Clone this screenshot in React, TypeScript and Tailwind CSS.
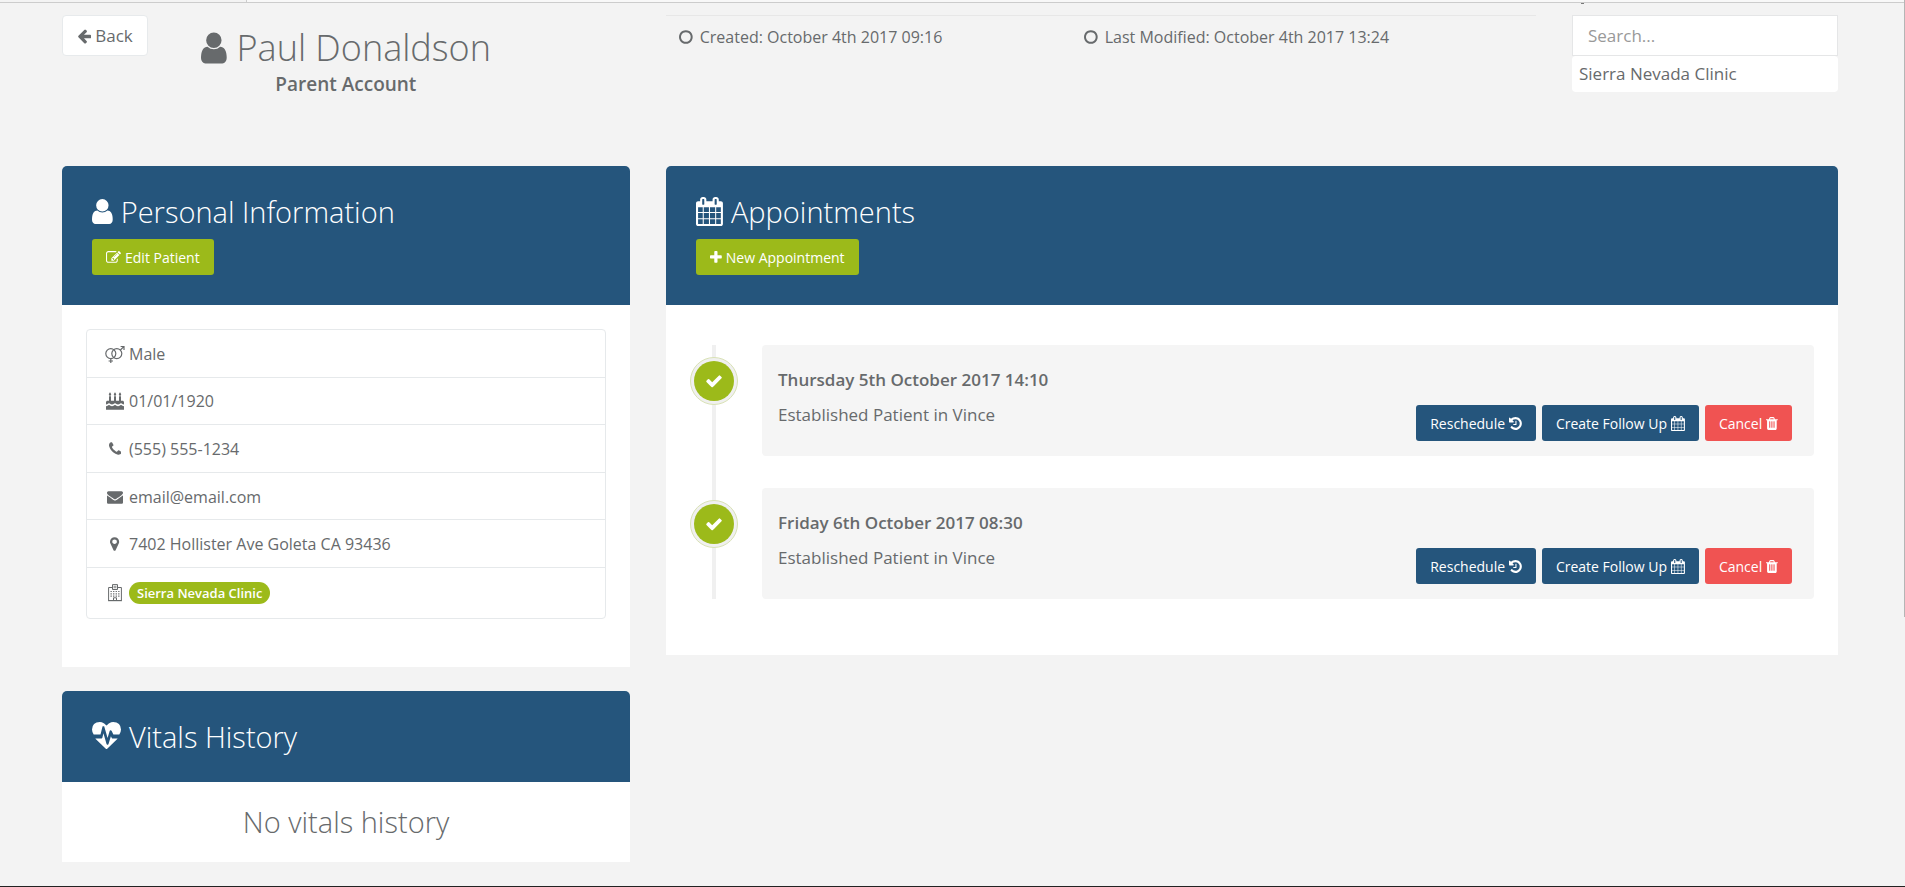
import React from "react";

type Glyph = { x: number; w: number; d: string };

const glyphs: Record<string, Glyph> = {
  user: { x: 256, w: 1280, d: "M1536 1399q0 109-62.5 187t-150.5 78h-854q-88 0-150.5-78t-62.5-187q0-85 8.5-160.5t31.5-152 58.5-131 94-89 134.5-34.5q131 128 313 128t313-128q76 0 134.5 34.5t94 89 58.5 131 31.5 152 8.5 160.5zm-256-887q0 159-112.5 271.5t-271.5 112.5-271.5-112.5-112.5-271.5 112.5-271.5 271.5-112.5 271.5 112.5 112.5 271.5z" },
  calendar: { x: 64, w: 1664, d: "M192 1664h288v-288h-288v288zm352 0h320v-288h-320v288zm-352-352h288v-320h-288v320zm352 0h320v-320h-320v320zm-352-384h288v-288h-288v288zm736 736h320v-288h-320v288zm-384-736h320v-288h-320v288zm768 736h288v-288h-288v288zm-384-352h320v-320h-320v320zm-352-864v-288q0-13-9.5-22.5t-22.5-9.5h-64q-13 0-22.5 9.5t-9.5 22.5v288q0 13 9.5 22.5t22.5 9.5h64q13 0 22.5-9.5t9.5-22.5zm736 864h288v-320h-288v320zm-384-384h320v-288h-320v288zm384 0h288v-288h-288v288zm32-480v-288q0-13-9.5-22.5t-22.5-9.5h-64q-13 0-22.5 9.5t-9.5 22.5v288q0 13 9.5 22.5t22.5 9.5h64q13 0 22.5-9.5t9.5-22.5zm384-64v1280q0 52-38 90t-90 38h-1408q-52 0-90-38t-38-90v-1280q0-52 38-90t90-38h128v-96q0-66 47-113t113-47h64q66 0 113 47t47 113v96h384v-96q0-66 47-113t113-47h64q66 0 113 47t47 113v96h128q52 0 90 38t38 90z" },
  check: { x: 0, w: 1792, d: "M1671 566q0 40-28 68l-724 724-136 136q-28 28-68 28t-68-28l-136-136-362-362q-28-28-28-68t28-68l136-136q28-28 68-28t68 28l294 295 656-657q28-28 68-28t68 28l136 136q28 28 28 68z" },
  plus: { x: 192, w: 1408, d: "M1600 736v192q0 40-28 68t-68 28h-416v416q0 40-28 68t-68 28h-192q-40 0-68-28t-28-68v-416h-416q-40 0-68-28t-28-68v-192q0-40 28-68t68-28h416v-416q0-40 28-68t68-28h192q40 0 68 28t28 68v416h416q40 0 68 28t28 68z" },
  history: { x: 128, w: 1536, d: "M1664 896q0 156-61 298t-164 245-245 164-298 61q-172 0-327-72.5t-264-204.5q-7-10-6.5-22.5t8.5-20.5l137-138q10-9 25-9 16 2 23 12 73 95 179 147t225 52q104 0 198.5-40.5t163.5-109.5 109.5-163.5 40.5-198.5-40.5-198.5-109.5-163.5-163.5-109.5-198.5-40.5q-98 0-188 35.5t-160 101.5l137 138q31 30 14 69-17 40-59 40h-448q-26 0-45-19t-19-45v-448q0-42 40-59 39-17 69 14l130 129q107-101 244.5-156.5t284.5-55.5q156 0 298 61t245 164 164 245 61 298zm-640-288v448q0 14-9 23t-23 9h-320q-14 0-23-9t-9-23v-64q0-14 9-23t23-9h224v-352q0-14 9-23t23-9h64q14 0 23 9t9 23z" },
  trash: { x: 192, w: 1408, d: "M704 1376v-704q0-14-9-23t-23-9h-64q-14 0-23 9t-9 23v704q0 14 9 23t23 9h64q14 0 23-9t9-23zm256 0v-704q0-14-9-23t-23-9h-64q-14 0-23 9t-9 23v704q0 14 9 23t23 9h64q14 0 23-9t9-23zm256 0v-704q0-14-9-23t-23-9h-64q-14 0-23 9t-9 23v704q0 14 9 23t23 9h64q14 0 23-9t9-23zm-544-992h448l-48-117q-7-9-17-11h-317q-10 2-17 11zm928 32v64q0 14-9 23t-23 9h-96v948q0 83-47 143.5t-113 60.5h-832q-66 0-113-58.5t-47-141.5v-952h-96q-14 0-23-9t-9-23v-64q0-14 9-23t23-9h309l70-167q15-37 54-63t79-26h320q40 0 79 26t54 63l70 167h309q14 0 23 9t9 23z" },
  arrowLeft: { x: 64, w: 1600, d: "M1664 896v128q0 53-32.5 90.5t-84.5 37.5h-704l293 294q38 36 38 90t-38 90l-75 76q-37 37-90 37-52 0-91-37l-651-652q-37-37-37-90 0-52 37-91l651-650q38-38 91-38 52 0 90 38l75 74q38 38 38 91t-38 91l-293 293h704q52 0 84.5 37.5t32.5 90.5z" },
  circle: { x: 128, w: 1536, d: "M896 352q-148 0-273 73t-198 198-73 273 73 273 198 198 273 73 273-73 198-198 73-273-73-273-198-198-273-73zm768 544q0 209-103 385.5t-279.5 279.5-385.5 103-385.5-103-279.5-279.5-103-385.5 103-385.5 279.5-279.5 385.5-103 385.5 103 279.5 279.5 103 385.5z" },
  phone: { x: 192, w: 1408, d: "M1600 1240q0 27-10 70.5t-21 68.5q-21 50-122 106-94 51-186 51-27 0-52.5-3.5t-57.5-12.5-47.5-14.5-55.5-20.5-49-18q-98-35-175-83-128-79-264.5-215.5t-215.5-264.5q-48-77-83-175-3-9-18-49t-20.5-55.5-14.5-47.5-12.5-57.5-3.5-52.5q0-92 51-186 56-101 106-122 25-11 68.5-21t70.5-10q14 0 21 3 18 6 53 76 11 19 30 54t35 63.5 31 53.5q3 4 17.5 25t21.5 35.5 7 28.5q0 20-28.5 50t-62 55-62 53-28.5 46q0 9 5 22.5t8.5 20.5 14 24 11.5 19q76 137 174 235t235 174q2 1 19 11.5t24 14 20.5 8.5 22.5 5q18 0 46-28.5t53-62 55-62 50-28.5q14 0 28.5 7t35.5 21.5 25 17.5q25 15 53.5 31t63.5 35 54 30q70 35 76 53 3 7 3 21z" },
  envelope: { x: 0, w: 1792, d: "M1792 710v794q0 66-47 113t-113 47h-1472q-66 0-113-47t-47-113v-794q44 49 101 87 362 246 497 345 57 42 92.5 65.5t94.5 48 110 24.5h2q51 0 110-24.5t94.5-48 92.5-65.5q170-123 498-345 57-39 100-87zm0-294q0 79-49 151t-122 123q-376 261-468 325-10 7-42.5 30.5t-54 38-52 32.5-57.5 27-50 9h-2q-23 0-50-9t-57.5-27-52-32.5-54-38-42.5-30.5q-91-64-262-182.5t-205-142.5q-62-42-117-115.5t-55-136.5q0-78 41.5-130t118.5-52h1472q65 0 112.5 47t47.5 113z" },
  marker: { x: 384, w: 1024, d: "M1152 640q0-106-75-181t-181-75-181 75-75 181 75 181 181 75 181-75 75-181zm256 0q0 109-33 179l-364 774q-16 33-47.5 52t-67.5 19-67.5-19-46.5-52l-365-774q-33-70-33-179 0-212 150-362t362-150 362 150 150 362z" },
  heartbeat: { x: 0, w: 1792, d: "M1280 1024h305q-5 6-10 10.5t-9 7.5l-3 4-623 600q-18 18-44 18t-44-18l-624-602q-5-2-21-20h369q22 0 39.5-13.5t22.5-34.5l70-281 190 667q6 20 23 33t39 13q21 0 38-13t23-33l146-485 56 112q18 35 57 35zm512-556q0 145-103 300h-369l-111-221q-8-17-25.5-27t-36.5-8q-45 5-56 46l-129 430-196-686q-6-20-23.5-33t-39.5-13-39 13.5-22 34.5l-116 464h-423q-103-155-103-300 0-220 127-344t351-124q62 0 126.5 21.5t120 58 95.5 68.5 76 68q36-36 76-68t95.5-68.5 120-58 126.5-21.5q224 0 351 124t127 344z" },
  edit: { x: 0, w: 1792, d: "M888 1184l116-116-152-152-116 116v56h96v96h56zm440-720q-16-16-33 1l-350 350q-17 17-1 33t33-1l350-350q17-17 1-33zm80 594v190q0 119-84.5 203.5t-203.5 84.5h-832q-119 0-203.5-84.5t-84.5-203.5v-832q0-119 84.5-203.5t203.5-84.5h832q63 0 117 25 15 7 18 23 3 17-9 29l-49 49q-14 14-32 8-23-6-45-6h-832q-66 0-113 47t-47 113v832q0 66 47 113t113 47h832q66 0 113-47t47-113v-126q0-13 9-22l64-64q15-15 35-7t20 29zm-96-738l288 288-672 672h-288v-288zm444 132l-92 92-288-288 92-92q28-28 68-28t68 28l152 152q28 28 28 68t-28 68z" },
};

function Icon({ name, className }: { name: string; className: string }) {
  const g = glyphs[name];
  return (
    <svg aria-hidden="true" viewBox={`${g.x} 0 ${g.w} 1792`} fill="currentColor" className={`w-auto shrink-0 ${className}`}>
      <path d={g.d} />
    </svg>
  );
}

function VenusMars() {
  return (
    <svg aria-hidden="true" viewBox="0 0 20 18" fill="none" stroke="currentColor" strokeWidth="1.2" className="h-[18px] w-5 shrink-0">
      <circle cx="5.8" cy="8.600" r="5" />
      <circle cx="11.800" cy="8.600" r="5" />
      <path d="M5.800 13.600V18M3.600 16H8M15.400 5L18.800 1.600M15.600 1.500H19V5" />
    </svg>
  );
}

function Cake() {
  return (
    <svg aria-hidden="true" viewBox="0 0 18 18" fill="currentColor" className="h-[18px] w-[18px] shrink-0">
      <path d="M3 4.2h2V9H3zM8 4.2h2V9H8zM13 4.2h2V9h-2zM4 0.2c.9 1.1 1.2 1.8 1.2 2.4a1.2 1.2 0 0 1-2.4 0C2.800 2 3.100 1.300 4 .2zM9 .2c.9 1.100 1.200 1.800 1.200 2.400a1.200 1.200 0 0 1-2.400 0C7.800 2 8.100 1.300 9 .2zM14 .2c.9 1.100 1.200 1.800 1.200 2.400a1.200 1.200 0 0 1-2.400 0c0-.6.3-1.300 1.200-2.400z" />
      <path d="M0 12.600V10.300C0 9.500.7 8.800 1.500 8.800h15c.8 0 1.500.7 1.500 1.500v2.300c-1.500 0-1.700-1.300-3-1.300s-1.500 1.300-3 1.300-1.700-1.300-3-1.300-1.500 1.300-3 1.300-1.700-1.300-3-1.300-1.500 1.300-3 1.300z" />
      <path d="M0 14.300c1.500 0 1.700-1.300 3-1.300s1.500 1.300 3 1.300 1.700-1.300 3-1.300 1.500 1.300 3 1.300 1.700-1.300 3-1.300 1.500 1.300 3 1.300V17.800H0z" />
    </svg>
  );
}

function Hospital() {
  return (
    <svg aria-hidden="true" viewBox="0 0 14 18" fill="none" stroke="currentColor" className="h-[18px] w-3.5 shrink-0">
      <path d="M4.500 3.500H.6V16.500H13.400V3.500H9.500M4.500 5.500V.6H9.500V5.500z" />
      <path d="M6.100 1.700V4.400M7.900 1.700V4.400M6.100 3H7.900" strokeWidth=".7" />
      <path d="M2.500 7.500h9M2.500 9.800h9M2.500 12.100h9" strokeWidth="1.200" strokeDasharray="1.300 1.260" />
      <path d="M5.500 16.500V13.800h3v2.700M0 16.700h14" />
    </svg>
  );
}

function Panel({ icon, title, action, children }: { icon: string; title: string; action?: React.ReactNode; children: React.ReactNode }) {
  return (
    <section className="rounded-t-[5px] bg-white">
      <header className={`rounded-t-[5px] bg-[#25557c] px-[30px] pt-[26px] text-white ${action ? "pb-[30px]" : "pb-[26px]"}`}>
        <h2 className="flex items-center gap-2 text-[29px] leading-[39px] font-light">
          <Icon name={icon} className="h-[29px]" />
          {title}
        </h2>
        {action && <div className="flex pt-2">{action}</div>}
      </header>
      {children}
    </section>
  );
}

const btn = "flex h-9 items-center gap-1 rounded-[3px] px-[14px] pt-px text-[14px] leading-5 text-white";

function Appointment({ date }: { date: string }) {
  return (
    <li className="flex items-start gap-6">
      <div className="relative mt-3 flex h-12 w-12 shrink-0 items-center justify-center rounded-full border border-[#d9e2b5] bg-[#f0f0f0]">
        <span className="flex h-10 w-10 items-center justify-center rounded-full bg-[#9cba1a] text-white">
          <Icon name="check" className="h-[18px]" />
        </span>
      </div>
      <article className="flex min-h-[111px] flex-1 flex-wrap items-end justify-between gap-x-4 rounded-[4px] bg-[#f5f5f5] pt-[23px] pr-[22px] pb-[15px] pl-4">
        <div className="self-start">
          <h3 className="text-[17px] leading-6 font-semibold">{date}</h3>
          <p className="mt-[11px] text-[17px] leading-6">Established Patient in Vince</p>
        </div>
        <div className="flex gap-[6px]">
          <button type="button" className={`${btn} bg-[#25557c]`}>Reschedule<Icon name="history" className="h-[15px]" /></button>
          <button type="button" className={`${btn} bg-[#25557c]`}>Create Follow Up<Icon name="calendar" className="h-[15px]" /></button>
          <button type="button" className={`${btn} bg-[#f05352]`}>Cancel<Icon name="trash" className="h-[15px]" /></button>
        </div>
      </article>
    </li>
  );
}

function InfoRow({ icon, children, last }: { icon: React.ReactNode; children: React.ReactNode; last?: boolean }) {
  return (
    <li className={`flex items-center gap-1 px-[18px] text-[16px] leading-6 ${last ? "h-[50px]" : "flex-1 border-b border-[#e6e9eb] pt-px"}`}>
      <span className="flex w-5 shrink-0 justify-center">{icon}</span>
      {children}
    </li>
  );
}

export default function App() {
  return (
    <div className="relative flex min-h-screen flex-col border-b border-[#222] bg-[#f3f3f3] font-['Open_Sans','Noto_Sans',sans-serif] text-[16px] text-[#676a6c]">
      <div className="flex h-[3px] border-b border-[#ccc] bg-[#f8f8f8]">
        <div className="w-[247px] border-r border-[#ccc] bg-[#f3f3f3]" />
      </div>
      <div className="absolute top-0 right-0 h-[617px] w-px bg-[#b5b5b5]" />

      <main className="pt-3 pr-[67px] pl-[62px]">
        <div className="grid min-h-[151px] grid-cols-12 items-start gap-x-9">
          <div className="col-span-4 flex items-start gap-[53px]">
            <button type="button" className="flex h-[41px] items-center gap-1 rounded-[4px] border border-[#e7eaec] bg-white px-[14px] text-[17px]">
              <Icon name="arrowLeft" className="h-4" />
              Back
            </button>
            <div className="pt-[9px] text-center">
              <h1 className="flex items-center gap-[10px] text-[36px] leading-[48px] font-light whitespace-nowrap">
                <Icon name="user" className="h-9" />
                Paul Donaldson
              </h1>
              <p className="text-[19px] leading-6 font-semibold">Parent Account</p>
            </div>
          </div>
          <div className="col-span-6 grid grid-cols-[405px_1fr] border-t border-[#e7e7e7] px-[13px] pt-[9px] leading-6">
            <span className="flex items-center gap-[7px]"><Icon name="circle" className="h-4" />Created: October 4th 2017 09:16</span>
            <span className="flex items-center gap-[7px]"><Icon name="circle" className="h-4" />Last Modified: October 4th 2017 13:24</span>
          </div>
          <div className="relative col-span-2">
            <span className="absolute -top-3 left-[9px] h-px w-[3px] bg-[#777]" />
            <input type="search" aria-label="Search" placeholder="Search..." className="block h-[41px] w-full border border-[#e5e6e7] bg-white px-[15px] text-[17px] placeholder:text-[#999]" />
            <select aria-label="Clinic" className="block h-9 w-full appearance-none rounded-[4px] bg-white px-[7px] text-[17px]">
              <option>Sierra Nevada Clinic</option>
            </select>
          </div>
        </div>

        <div className="grid grid-cols-3 items-start gap-9">
          <div className="flex flex-col gap-6">
            <Panel icon="user" title="Personal Information" action={<button type="button" className={`${btn} bg-[#9cba1a]`}><Icon name="edit" className="h-[15px]" />Edit Patient</button>}>
              <div className="px-6 pt-6 pb-12">
                <ul className="flex min-h-[290px] flex-col rounded-[4px] border border-[#e6e9eb]">
                  <InfoRow icon={<VenusMars />}>Male</InfoRow>
                  <InfoRow icon={<Cake />}>01/01/1920</InfoRow>
                  <InfoRow icon={<Icon name="phone" className="h-4" />}>(555) 555-1234</InfoRow>
                  <InfoRow icon={<Icon name="envelope" className="h-4" />}>email@email.com</InfoRow>
                  <InfoRow icon={<Icon name="marker" className="h-4" />}>7402 Hollister Ave Goleta CA 93436</InfoRow>
                  <InfoRow last icon={<Hospital />}>
                    <span className="rounded-full bg-[#9cba1a] px-2 text-[13px] leading-[22px] font-semibold text-white">Sierra Nevada Clinic</span>
                  </InfoRow>
                </ul>
              </div>
            </Panel>
            <Panel icon="heartbeat" title="Vitals History">
              <p className="py-5 text-center text-[29px] leading-10 font-light">No vitals history</p>
            </Panel>
          </div>

          <div className="col-span-2">
            <Panel icon="calendar" title="Appointments" action={<button type="button" className={`${btn} bg-[#9cba1a]`}><Icon name="plus" className="h-[15px]" />New Appointment</button>}>
              <div className="pt-10 pr-6 pb-14 pl-6">
                <ol className="relative flex flex-col gap-8">
                  <div className="absolute top-0 bottom-0 left-[22px] w-1 bg-[#f0f0f0]" />
                  <Appointment date="Thursday 5th October 2017 14:10" />
                  <Appointment date="Friday 6th October 2017 08:30" />
                </ol>
              </div>
            </Panel>
          </div>
        </div>
      </main>
    </div>
  );
}
